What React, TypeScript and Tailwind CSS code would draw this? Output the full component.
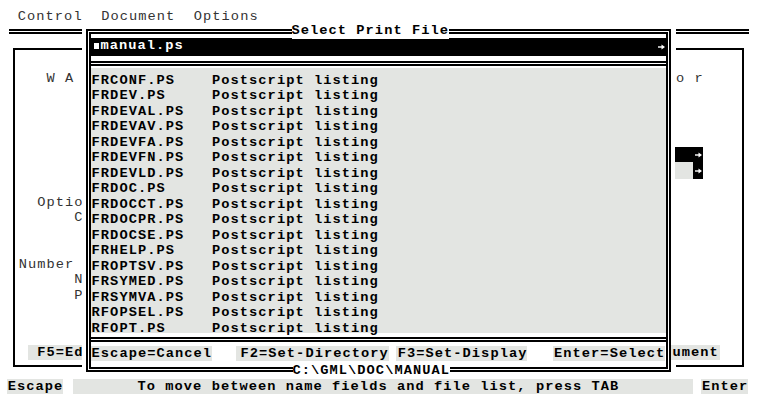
const files = [
  "FRCONF.PS",
  "FRDEV.PS",
  "FRDEVAL.PS",
  "FRDEVAV.PS",
  "FRDEVFA.PS",
  "FRDEVFN.PS",
  "FRDEVLD.PS",
  "FRDOC.PS",
  "FRDOCCT.PS",
  "FRDOCPR.PS",
  "FRDOCSE.PS",
  "FRHELP.PS",
  "FROPTSV.PS",
  "FRSYMED.PS",
  "FRSYMVA.PS",
  "RFOPSEL.PS",
  "RFOPT.PS",
];

// labels of the document window, partly hidden by the dialog
const leftLabels = ["W A ", "", "", "", "", "", "", "", "Optio", "C", "", "", "Number ", "N", "P"];

function Arrow() {
  return (
    <svg width="7" height="6" viewBox="0 0 7 6" className="block">
      <rect x="0" y="2.3" width="4" height="1.4" fill="white" />
      <path d="M3.5 0.5 L7 3 L3.5 5.5 Z" fill="white" />
    </svg>
  );
}

export default function App() {
  return (
    <div className="relative w-[761px] h-[400px] overflow-hidden bg-white text-black font-['Liberation_Mono','Courier_New',monospace] text-[13.7px] tracking-[1.05px] leading-[15.5px]">
      {/* Menu bar */}
      <div className="h-[24.9px] pt-[9.4px] pl-[17.8px] whitespace-pre text-[#333]">
        Control  Document  Options
      </div>
      <div className="mt-[4.6px] ml-[9.3px] w-[739.7px] border-t-[5px] border-double border-black" />

      {/* Document window behind the dialog */}
      <div className="mt-[13.5px] ml-[13px] w-[731px] h-[319px] border-2 border-black flex">
        <div className="w-[68.5px] pt-[20.9px] flex flex-col text-right whitespace-pre text-[#333]">
          {leftLabels.map((label, i) => (
            <div key={i} className="h-[15.5px]">
              {label}
            </div>
          ))}
          <div className="mt-[42.1px] h-[15.5px]">
            <span className="bg-[#e3e5e2] font-bold text-black"> F5=Ed</span>
          </div>
        </div>
        <div className="flex-1" />
        <div className="relative z-10 w-[71.5px] pt-[20.9px] flex flex-col whitespace-pre">
          <div className="h-[15.5px] pl-[5.6px] text-[#333]">o r</div>
          <div className="mt-[60.9px] ml-[4.2px] w-[28px]">
            <div className="h-[15px] bg-black flex items-center justify-end pr-[1px]">
              <Arrow />
            </div>
            <div className="h-[17px] flex">
              <div className="w-[18.6px] bg-[#e3e5e2]" />
              <div className="flex-1 bg-black flex items-center justify-end pr-[1px]">
                <Arrow />
              </div>
            </div>
          </div>
          <div className="mt-[166.2px] h-[15.5px]">
            <span className="bg-[#e3e5e2] font-bold pl-[2px] pr-[1px]">ument</span>
          </div>
        </div>
      </div>

      {/* Status line */}
      <div className="mt-[11.8px] h-[15.5px] pl-[7.3px] flex whitespace-pre font-bold">
        <span className="bg-[#e3e5e2] pl-[0.5px]">Escape</span>
        <span className="ml-[9.3px] bg-[#e3e5e2]">
          {"       To move between name fields and file list, press TAB        "}
        </span>
        <span className="ml-[8px] pl-[0.5px] bg-[#e3e5e2]">Enter</span>
      </div>

      {/* Select Print File dialog */}
      <div className="absolute z-0 left-[82px] top-[23.2px] w-[594px] h-[351.8px] bg-white">
        <div className="mt-[6.3px] ml-[4px] w-[585px] h-[342.5px] border-[5px] border-double border-black flex flex-col">
          <div className="mt-[3.8px] h-[17.7px] bg-black text-white font-bold flex items-start">
            <span className="mt-[5px] ml-[3px] w-[5px] h-[6px] bg-white" />
            <span className="ml-[1.5px] whitespace-pre">manual.ps</span>
            <span className="ml-auto mr-[1px] mt-[5.7px]">
              <Arrow />
            </span>
          </div>
          <div className="mt-[5.5px] border-t-[5px] border-double border-black" />
          <div className="mt-[1.8px] h-[264.4px] pt-[4.4px] pl-[0.6px] bg-[#e3e5e2] font-bold whitespace-pre">
            {files.map((f) => (
              <div key={f} className="h-[15.5px]">
                {f.padEnd(13, " ")}Postscript listing
              </div>
            ))}
          </div>
          <div className="mt-[4.6px] border-t-[5px] border-double border-black" />
          <div className="mt-[3.7px] h-[15.5px] flex font-bold whitespace-pre">
            <span className="pl-[0.6px] bg-[#e3e5e2]">Escape=Cancel</span>
            <span className="ml-[23.5px] pl-[5px] bg-[#e3e5e2]">F2=Set-Directory</span>
            <span className="ml-[7.2px] pl-[1.8px] bg-[#e3e5e2]">F3=Set-Display</span>
            <span className="ml-[26px] pl-[0.6px] bg-[#e3e5e2]">Enter=Select</span>
          </div>
        </div>
        <div className="absolute top-0 left-[209.5px] h-[15.5px] bg-white font-bold whitespace-pre">
          Select Print File
        </div>
        <div className="absolute top-[340px] left-[210.5px] h-[15.5px] bg-white font-bold whitespace-pre">
          C:\GML\DOC\MANUAL
        </div>
      </div>
    </div>
  );
}
